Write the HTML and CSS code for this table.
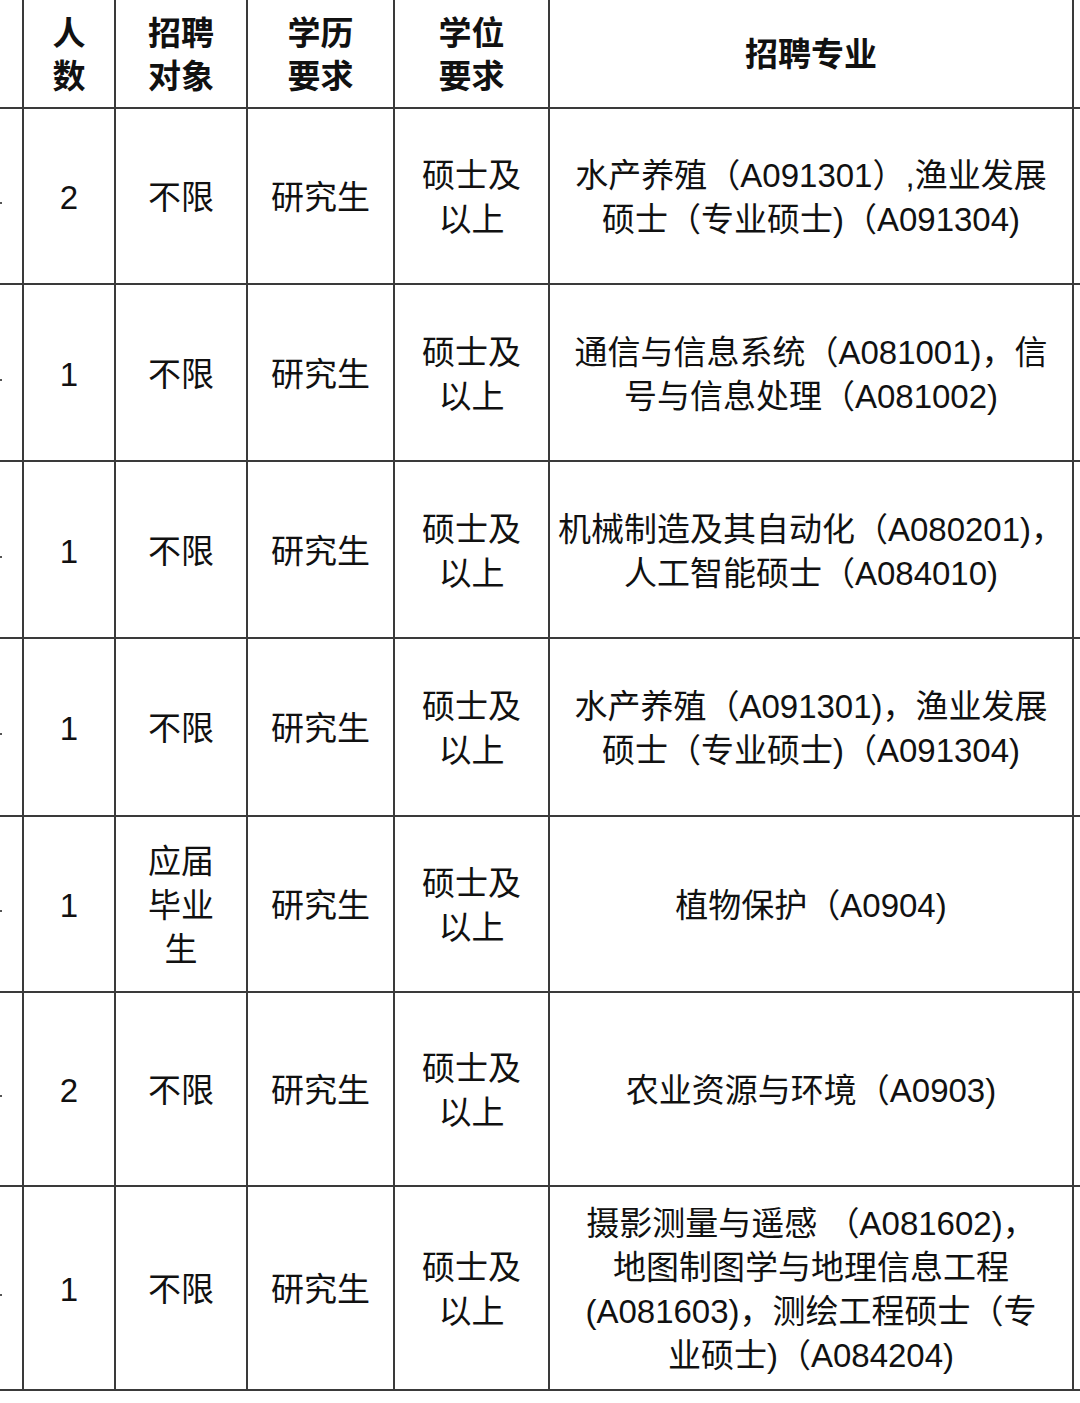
FILE: index.html
```html
<!DOCTYPE html>
<html lang="zh-CN">
<head>
<meta charset="utf-8">
<title>招聘专业</title>
<link rel="stylesheet" href="styles.css">
</head>
<body>
<div class="sheet">
  <div class="cell edge"></div>
  <div class="cell head">人<br>数</div>
  <div class="cell head">招聘<br>对象</div>
  <div class="cell head">学历<br>要求</div>
  <div class="cell head">学位<br>要求</div>
  <div class="cell head">招聘专业</div>
  <div class="cell tail"></div>

  <div class="cell edge"><span class="mark"></span></div>
  <div class="cell">2</div>
  <div class="cell">不限</div>
  <div class="cell">研究生</div>
  <div class="cell">硕士及<br>以上</div>
  <div class="cell major">水产养殖（A091301）,渔业发展<br>硕士（专业硕士)（A091304)</div>
  <div class="cell tail"></div>

  <div class="cell edge"><span class="mark"></span></div>
  <div class="cell">1</div>
  <div class="cell">不限</div>
  <div class="cell">研究生</div>
  <div class="cell">硕士及<br>以上</div>
  <div class="cell major">通信与信息系统（A081001)，信<br>号与信息处理（A081002)</div>
  <div class="cell tail"></div>

  <div class="cell edge"><span class="mark"></span></div>
  <div class="cell">1</div>
  <div class="cell">不限</div>
  <div class="cell">研究生</div>
  <div class="cell">硕士及<br>以上</div>
  <div class="cell major">机械制造及其自动化（A080201)，<br>人工智能硕士（A084010)</div>
  <div class="cell tail"></div>

  <div class="cell edge"><span class="mark"></span></div>
  <div class="cell">1</div>
  <div class="cell">不限</div>
  <div class="cell">研究生</div>
  <div class="cell">硕士及<br>以上</div>
  <div class="cell major">水产养殖（A091301)，渔业发展<br>硕士（专业硕士)（A091304)</div>
  <div class="cell tail"></div>

  <div class="cell edge"><span class="mark"></span></div>
  <div class="cell">1</div>
  <div class="cell">应届<br>毕业<br>生</div>
  <div class="cell">研究生</div>
  <div class="cell">硕士及<br>以上</div>
  <div class="cell major">植物保护（A0904)</div>
  <div class="cell tail"></div>

  <div class="cell edge"><span class="mark"></span></div>
  <div class="cell">2</div>
  <div class="cell">不限</div>
  <div class="cell">研究生</div>
  <div class="cell">硕士及<br>以上</div>
  <div class="cell major">农业资源与环境（A0903)</div>
  <div class="cell tail"></div>

  <div class="cell edge"><span class="mark"></span></div>
  <div class="cell">1</div>
  <div class="cell">不限</div>
  <div class="cell">研究生</div>
  <div class="cell">硕士及<br>以上</div>
  <div class="cell major">摄影测量与遥感 （A081602)，<br>地图制图学与地理信息工程<br>(A081603)，测绘工程硕士（专<br>业硕士)（A084204)</div>
  <div class="cell tail"></div>
</div>
</body>
</html>
```

FILE: styles.css
```css
html, body {
  margin: 0;
  padding: 0;
  background: #ffffff;
}

body {
  width: 1080px;
  height: 1403px;
  overflow: hidden;
  font-family: "Liberation Sans", "Noto Sans CJK SC", sans-serif;
  color: #111111;
}

.sheet {
  display: grid;
  grid-template-columns: 24px 92px 132px 147px 155px 524px 20px;
  grid-template-rows: 109px 176px 177px 177px 178px 176px 194px 204px;
}

.cell {
  box-sizing: border-box;
  border-right: 2px solid #3a3a3a;
  border-bottom: 2px solid #3a3a3a;
  display: flex;
  align-items: center;
  justify-content: center;
  text-align: center;
  font-size: 33px;
  line-height: 44px;
  white-space: nowrap;
  padding-top: 4px;
}

.head {
  font-weight: 700;
  line-height: 43px;
  padding-top: 2px;
}

.major {
  padding-top: 4px;
}

.edge {
  justify-content: flex-start;
}

.mark {
  width: 2px;
  height: 2px;
  background: #555555;
  margin-top: 10px;
}

.tail {
  border-right: none;
}
```
